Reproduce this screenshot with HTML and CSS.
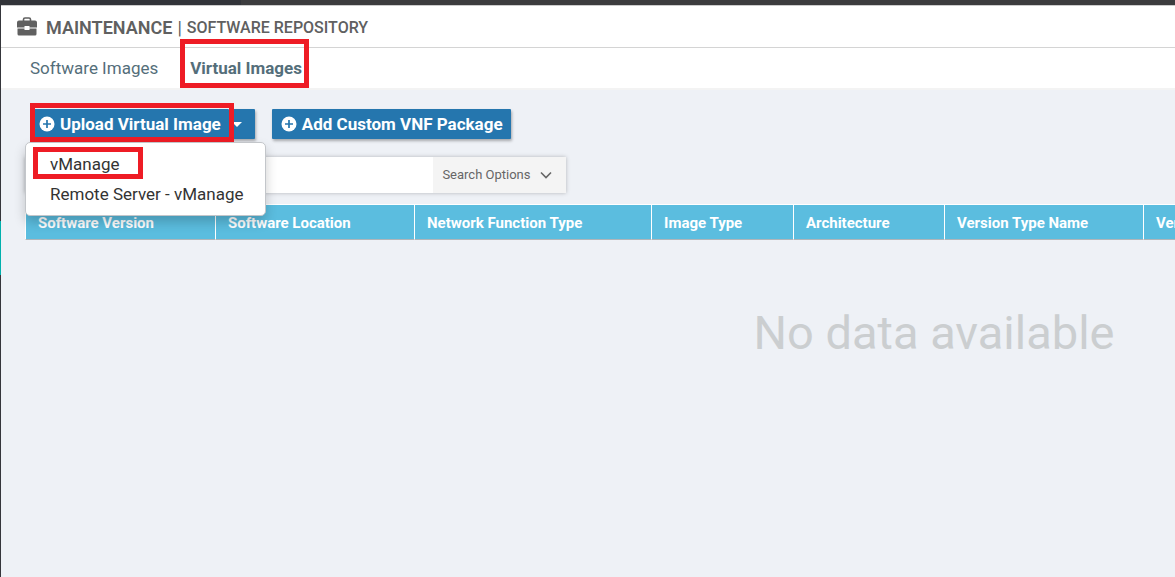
FILE: index.html
```html
<!DOCTYPE html>
<html lang="en">
<head>
<meta charset="utf-8">
<title>Maintenance | Software Repository</title>
<link rel="stylesheet" href="styles.css">
</head>
<body>
<div class="topbar"><div class="topbar-brand"></div></div>
<div class="shell">
  <div class="rail"><div class="rail-active"></div></div>
  <main class="main">
    <header class="page-header">
      <svg class="briefcase" viewBox="0 0 22 20" aria-hidden="true">
        <path d="M7.500 5V3.500Q7.500 2 9 2h4q1.500 0 1.500 1.500V5" fill="none" stroke="#606060" stroke-width="1.600"/>
        <path d="M3 4.500h16q2 0 2 2V11.500h-7.500V10h-5v1.500H1V6.500q0-2 2-2z" fill="#606060"/>
        <path d="M1.500 12.500h7V14h5v-1.500h7v5.500q0 1.500-1.500 1.500H3Q1.500 19.500 1.500 18z" fill="#606060"/>
      </svg>
      <h1 class="title">MAINTENANCE</h1>
      <span class="divider">|</span>
      <h2 class="subtitle">SOFTWARE REPOSITORY</h2>
    </header>
    <nav class="tabs">
      <a class="tab" href="#software">Software Images</a>
      <a class="tab tab-active marked" href="#virtual">Virtual Images</a>
    </nav>
    <section class="content">
      <div class="actions">
        <div class="split">
          <button class="btn btn-upload marked" type="button">
            <svg class="plus" viewBox="0 0 16 16" aria-hidden="true"><circle cx="8" cy="8" r="7.500" fill="#fff"/><path d="M8 4v8M4 8h8" stroke="#2576ae" stroke-width="1.700"/></svg>
            Upload Virtual Image
          </button>
          <button class="btn btn-caret" type="button" aria-label="Upload options"><span class="caret"></span></button>
          <ul class="menu">
            <li><a class="menu-item marked" href="#vmanage">vManage</a></li>
            <li><a class="menu-item" href="#remote">Remote Server - vManage</a></li>
          </ul>
        </div>
        <button class="btn" type="button">
          <svg class="plus" viewBox="0 0 16 16" aria-hidden="true"><circle cx="8" cy="8" r="7.500" fill="#fff"/><path d="M8 4v8M4 8h8" stroke="#2576ae" stroke-width="1.700"/></svg>
          Add Custom VNF Package
        </button>
      </div>
      <div class="search">
        <input class="search-input" type="text" aria-label="Search">
        <button class="search-options" type="button">Search Options
          <svg class="chevron" viewBox="0 0 12 8" aria-hidden="true"><path d="M1 1.500l5 5 5-5" fill="none" stroke="#666" stroke-width="1.600"/></svg>
        </button>
      </div>
      <div class="table-scroll">
        <table class="images">
          <colgroup>
            <col class="c-version"><col class="c-location"><col class="c-function"><col class="c-image"><col class="c-arch"><col class="c-typename"><col class="c-rest">
          </colgroup>
          <thead>
            <tr><th>Software Version</th><th>Software Location</th><th>Network Function Type</th><th>Image Type</th><th>Architecture</th><th>Version Type Name</th><th>Version</th></tr>
          </thead>
          <tbody>
            <tr><td class="empty" colspan="7">No data available</td></tr>
          </tbody>
        </table>
      </div>
    </section>
  </main>
</div>
</body>
</html>
```
FILE: styles.css
```css
* { box-sizing: border-box; }
body {
  margin: 0;
  min-height: 100vh;
  display: flex;
  flex-direction: column;
  background: #eef1f6;
  font-family: Roboto, "Liberation Sans", sans-serif;
  color: #333;
  overflow-x: hidden;
}
h1, h2, ul { margin: 0; padding: 0; }
button, input { font-family: inherit; border: 0; margin: 0; }
a { text-decoration: none; }

.topbar { height: 5px; background: #3c3c3e; }
.topbar-brand { width: 241px; height: 100%; background: #323439; }
.shell { flex: 1; display: flex; }
.rail { width: 1px; background: #35363b; padding-top: 216px; }
.rail-active { height: 54px; background: #00b0ad; }
.main { flex: 1; min-width: 0; }

.page-header {
  display: flex;
  align-items: center;
  height: 43px;
  padding: 2px 15px 0;
  background: #fff;
  border-top: 1px solid #ccc;
  border-bottom: 1px solid #d4d4d4;
  color: #606060;
}
.briefcase { width: 22px; height: 20px; margin: 0 8px 4px 0; }
.title { font-size: 18px; line-height: 24px; font-weight: 600; }
.divider { margin: 0 5px; font-size: 18px; }
.subtitle { font-size: 16px; line-height: 24px; font-weight: 500; }

.tabs {
  display: flex;
  gap: 32px;
  padding: 0 29px;
  background: #fff;
  border-bottom: 2px solid #f3f3f3;
}
.tab { font-size: 17px; line-height: 40px; color: #546e7a; }
.tab-active { font-weight: 700; }

/* Callout rectangles around the steps to follow */
.marked { position: relative; }
.marked::after {
  content: "";
  position: absolute;
  border: 5px solid #ee1c25;
  z-index: 3;
}
.tab.marked::after { inset: -9px -7px 0 -10px; }
.btn.marked::after { inset: -6px -5px -3px 0; }
.menu-item.marked::after { inset: -2px 122px 0 7px; }

.content { padding: 19px 0 0 24px; }
.actions { display: flex; gap: 17px; padding-left: 5px; }
.split { position: relative; display: flex; }
.btn {
  display: flex;
  align-items: center;
  gap: 5px;
  height: 30px;
  padding: 0 8px 0 9px;
  background: #2576ae;
  color: #fff;
  font-size: 17px;
  font-weight: 700;
  border-radius: 1px;
  box-shadow: 1px 2px 3px rgba(0, 0, 0, .3);
}
.btn-upload { z-index: 1; box-shadow: none; }
.btn-caret { padding: 0 13px 0 3px; }
.plus { width: 16px; height: 16px; }
.caret { border: 5px solid transparent; border-top-color: #fff; border-bottom: 0; }

.menu {
  position: absolute;
  top: 33px;
  left: -5px;
  z-index: 2;
  width: 241px;
  padding: 6px 0;
  list-style: none;
  background: #fff;
  border: 1px solid #c3c6ca;
  border-radius: 5px;
  box-shadow: 0 6px 12px rgba(0, 0, 0, .2);
}
.menu-item {
  display: block;
  padding: 0 24px;
  font-size: 17px;
  line-height: 30px;
  color: #333;
  white-space: nowrap;
}

.search {
  display: flex;
  width: 47%;
  height: 36px;
  margin-top: 18px;
  background: #fff;
  box-shadow: 0 0 4px rgba(0, 0, 0, .25);
}
.search-input { flex: 1; min-width: 0; padding: 0 12px; background: transparent; font-size: 13px; }
.search-options {
  display: flex;
  align-items: center;
  gap: 9px;
  padding: 0 14px 1px 9px;
  background: #f4f4f4;
  color: #666;
  font-size: 13px;
}
.chevron { width: 12px; height: 8px; }

.table-scroll { overflow: hidden; margin-top: 11px; }
.images { width: 1818px; table-layout: fixed; border-collapse: separate; border-spacing: 0; }
.c-version { width: 190px; }
.c-location { width: 199px; }
.c-function { width: 237px; }
.c-image { width: 142px; }
.c-arch { width: 151px; }
.c-typename { width: 199px; }
.images th {
  height: 36px;
  padding: 2px 12px 0;
  background: #5bbddf;
  border-top: 1px solid #fff;
  border-left: 1px solid #fff;
  border-bottom: 1px solid #b0b5b9;
  color: #fff;
  font-size: 15px;
  font-weight: 700;
  text-align: left;
}
.empty { height: 184px; padding: 0; font-size: 47px; text-align: center; color: #cbced0; }
```
